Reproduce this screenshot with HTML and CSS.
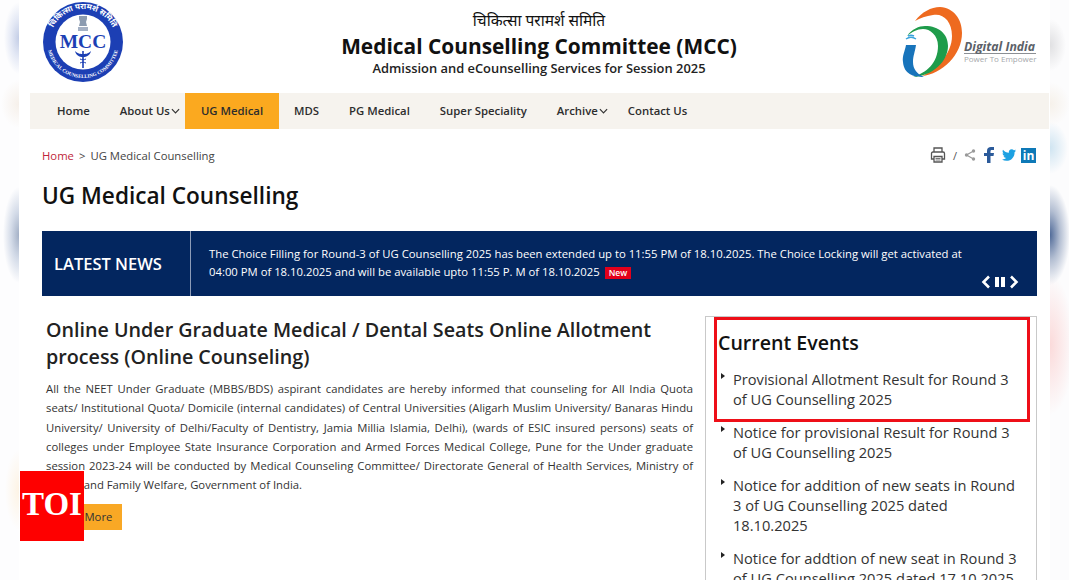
FILE: index.html
```html
<!DOCTYPE html>
<html lang="en">
<head>
<meta charset="utf-8">
<title>UG Medical Counselling</title>
<link rel="stylesheet" href="styles.css">
</head>
<body>
<div class="frame">
  <div class="side side-left"></div>
  <main class="page">
    <header class="masthead">
      <svg class="mcc-logo" viewBox="0 0 82 82" width="82" height="82" aria-label="MCC logo">
        <defs>
          <path id="ring-top" d="M8 41a33 33 0 0 1 66 0"/>
          <path id="ring-bottom" d="M5 41a36 36 0 0 0 72 0"/>
        </defs>
        <circle cx="41" cy="41" r="40" fill="#1c3fb4"/>
        <circle cx="41" cy="41" r="27.5" fill="#fff"/>
        <text class="mcc-ring" font-size="8"><textPath href="#ring-top" startOffset="50%" text-anchor="middle">चिकित्सा परामर्श समिति</textPath></text>
        <text class="mcc-ring" font-size="5"><textPath href="#ring-bottom" startOffset="50%" text-anchor="middle">MEDICAL COUNSELLING COMMITTEE</textPath></text>
        <path d="M37 15h8v3l-1 3 1 4h-8l1-4-1-3z" fill="#8b9bb0"/>
        <path d="M36 26h10v4H36z" fill="#a5b1c4"/>
        <text class="mcc-mark" x="41" y="47" text-anchor="middle">MCC</text>
        <path d="M41 50v17" stroke="#1c3fb4" stroke-width="1.6"/>
        <path d="M33 50c3 3 6 3 8 3s5 0 8-3c-1 4-4 6-8 6s-7-2-8-6z" fill="#1c3fb4"/>
        <path d="M38 58c2 1 4 1 6 0M38 62c2-1 4-1 6 0" stroke="#1c3fb4" fill="none"/>
      </svg>
      <div class="titles">
        <div class="title-hi">चिकित्सा परामर्श समिति</div>
        <div class="title-en">Medical Counselling Committee (MCC)</div>
        <div class="title-sub">Admission and eCounselling Services for Session 2025</div>
      </div>
      <div class="di-logo">
        <svg viewBox="0 0 62 72" width="62" height="72" aria-hidden="true">
          <path d="M13 14C20 5 29 0 38 0c14 1 22 12 22 26 0 22-20 41-40 43 14-6 30-22 30-40C50 14 41 6 31 8c-7 1-13 3-18 6z" fill="#ee6a1f"/>
          <path d="M5 29c5-7 12-10 18-10 14 0 23 8 23 20 0 15-15 30-35 31 13-4 25-14 25-31 0-11-8-17-15-17-6 0-11 3-16 7z" fill="#1f9c4b"/>
          <path d="M4 38h10c-1 7-3 11-3 17 0 7 4 12 11 15-11 0-20-3-21-15-1-6 2-11 3-17z" fill="#1874bb"/>
          <path d="M4 32c3-2 7-2 10 0M6 29c2-1 4-1 6 0" stroke="#3aa3dc" stroke-width="1.5" fill="none"/>
        </svg>
        <div class="di-words">
          <div class="di-name">Digital India</div>
          <div class="di-tag">Power To Empower</div>
        </div>
      </div>
    </header>

    <nav class="nav">
      <a class="nav-item">Home</a>
      <a class="nav-item nav-drop">About Us<svg class="chev" viewBox="0 0 10 6" width="9" height="6"><path d="M1 1l4 4 4-4" fill="none" stroke="#333" stroke-width="1.3"/></svg></a>
      <a class="nav-item nav-active">UG Medical</a>
      <a class="nav-item">MDS</a>
      <a class="nav-item">PG Medical</a>
      <a class="nav-item">Super Speciality</a>
      <a class="nav-item nav-drop">Archive<svg class="chev" viewBox="0 0 10 6" width="9" height="6"><path d="M1 1l4 4 4-4" fill="none" stroke="#333" stroke-width="1.3"/></svg></a>
      <a class="nav-item">Contact Us</a>
    </nav>

    <section class="content">
      <div class="crumb-row">
        <div class="crumbs"><span class="crumb-home">Home</span><span class="crumb-sep">&gt;</span><span>UG Medical Counselling</span></div>
        <div class="tools">
          <svg viewBox="0 0 16 16" width="16" height="16" aria-label="Print"><path d="M4 5V1h8v4M4 12H1.500V6.500q0-1.500 1.500-1.500h10q1.500 0 1.500 1.500V12H12" fill="none" stroke="#555" stroke-width="1.300"/><path d="M4 9.500h8V15H4z" fill="none" stroke="#555" stroke-width="1.300"/><path d="M5.500 11.500h5M5.500 13h5" stroke="#777"/></svg>
          <span class="tool-slash">/</span>
          <svg class="tool-share" viewBox="0 0 12 12" width="12" height="12" aria-label="Share"><path d="M9.500 2 2.500 6l7 4" fill="none" stroke="#999" stroke-width="1.200"/><circle cx="9.500" cy="2" r="1.700" fill="#999"/><circle cx="2.500" cy="6" r="1.700" fill="#999"/><circle cx="9.500" cy="10" r="1.700" fill="#999"/></svg>
          <svg viewBox="0 0 10 16" width="10" height="16" aria-label="Facebook"><path d="M3 16V9H0V6h3V4c0-3 1.600-4 4-4h3v3H8C6.700 3 6.500 3.500 6.500 4.500V6H10l-.5 3h-3v7z" fill="#2b5a9a"/></svg>
          <svg viewBox="0 0 24 20" width="14" height="12" aria-label="Twitter"><path d="M24 2.400c-.9.4-1.800.7-2.800.8 1-.6 1.800-1.600 2.200-2.700-1 .6-2 1-3.100 1.200A4.900 4.900 0 0 0 11.900 6.200C7.800 6 4.200 4 1.700.9.400 3.200 1 6.100 3.200 7.500c-.8 0-1.600-.2-2.200-.6 0 2.400 1.700 4.400 3.900 4.900-.7.200-1.500.2-2.200.1.600 2 2.400 3.400 4.600 3.400A9.900 9.900 0 0 1 0 17.800 13.900 13.900 0 0 0 7.500 20c9.100 0 14.300-7.700 14-14.600 1-.7 1.800-1.600 2.500-3z" fill="#1da1e2"/></svg>
          <span class="tool-in">in</span>
        </div>
      </div>

      <h1 class="page-title">UG Medical Counselling</h1>

      <section class="news">
        <div class="news-label">LATEST NEWS</div>
        <div class="news-body">
          <p class="news-text">The Choice Filling for Round-3 of UG Counselling 2025 has been extended up to 11:55 PM of 18.10.2025. The Choice Locking will get activated at 04:00 PM of 18.10.2025 and will be available upto 11:55 P. M of 18.10.2025 <span class="new-tag">New</span></p>
          <div class="news-ctrl">
            <svg viewBox="0 0 10 14" width="10" height="14"><path d="M8 1.500 2.500 7 8 12.500" fill="none" stroke="#fff" stroke-width="2.600"/></svg>
            <svg viewBox="0 0 10 10" width="10" height="10"><path d="M0 0h4v10H0zM6 0h4v10H6z" fill="#fff"/></svg>
            <svg viewBox="0 0 10 14" width="10" height="14"><path d="M2 1.500 7.500 7 2 12.500" fill="none" stroke="#fff" stroke-width="2.600"/></svg>
          </div>
        </div>
      </section>

      <div class="columns">
        <article class="intro">
          <h2 class="intro-title">Online Under Graduate Medical / Dental Seats Online Allotment process (Online Counseling)</h2>
          <p class="intro-text">All the NEET Under Graduate (MBBS/BDS) aspirant candidates are hereby informed that counseling for All India Quota seats/ Institutional Quota/ Domicile (internal candidates) of Central Universities (Aligarh Muslim University/ Banaras Hindu University/ University of Delhi/Faculty of Dentistry, Jamia Millia Islamia, Delhi), (wards of ESIC insured persons) seats of colleges under Employee State Insurance Corporation and Armed Forces Medical College, Pune for the Under graduate session 2023-24 will be conducted by Medical Counseling Committee/ Directorate General of Health Services, Ministry of Health and Family Welfare, Government of India.</p>
          <a class="read-more">Read More</a>
        </article>
        <aside class="events">
          <h2 class="events-title">Current Events</h2>
          <ul class="events-list">
            <li>Provisional Allotment Result for Round 3 of UG Counselling 2025</li>
            <li>Notice for provisional Result for Round 3 of UG Counselling 2025</li>
            <li>Notice for addition of new seats in Round 3 of UG Counselling 2025 dated 18.10.2025</li>
            <li>Notice for addtion of new seat in Round 3 of UG Counselling 2025 dated 17.10.2025</li>
          </ul>
          <div class="highlight"></div>
        </aside>
      </div>
    </section>
  </main>
  <div class="side side-right"></div>
  <div class="toi">TOI</div>
</div>
</body>
</html>
```
FILE: styles.css
```css
* { box-sizing: border-box; }
html, body { margin: 0; height: 100%; }
body {
  font-family: "Open Sans", "Noto Sans", sans-serif;
  color: #333;
  background: #fff;
  overflow: hidden;
}
.frame {
  position: relative;
  display: flex;
  width: 1069px;
  height: 580px;
  overflow: hidden;
}
.side { flex: 0 0 19px; height: 580px; }
.side-left {
  background:
    radial-gradient(ellipse 15px 36px at 19px 38px, #c3cde6 0, rgba(200,210,235,.45) 55%, rgba(255,255,255,0) 100%),
    radial-gradient(ellipse 18px 24px at 19px 104px, #f6f0ea 0, rgba(255,255,255,0) 100%),
    radial-gradient(ellipse 16px 48px at 19px 235px, #a3b0c6 0, rgba(170,185,210,.5) 50%, rgba(255,255,255,0) 100%),
    radial-gradient(ellipse 14px 40px at 19px 490px, #fdf3e4 0, rgba(255,255,255,0) 100%),
    #fdfdfe;
}
.side-right {
  background:
    radial-gradient(ellipse 16px 26px at 0 45px, #e0e0e2 0, rgba(255,255,255,0) 100%),
    radial-gradient(ellipse 20px 22px at 0 104px, #f6f1ea 0, rgba(255,255,255,0) 100%),
    radial-gradient(ellipse 18px 26px at 0 148px, #cfe4f1 0, rgba(255,255,255,0) 100%),
    radial-gradient(ellipse 20px 50px at 0 235px, #506a98 0, rgba(120,140,175,.55) 50%, rgba(255,255,255,0) 100%),
    radial-gradient(ellipse 24px 70px at 0 345px, #fbdada 0, rgba(255,255,255,0) 100%),
    #fcfcfd;
}

.page {
  flex: 1 1 auto;
  min-width: 0;
  padding: 0 1px 0 11px;
  background: #fff;
}
.masthead {
  display: flex;
  align-items: flex-start;
  justify-content: space-between;
  height: 93px;
  padding: 1px 13px 0 12px;
}
.mcc-logo { display: block; }
.mcc-ring { fill: #fff; font-family: "Liberation Serif", "Noto Sans", serif; font-weight: 700; }
.mcc-mark {
  fill: #1c3fb4;
  font-family: "Liberation Serif", serif;
  font-weight: 700;
  font-size: 19.500px;
}
.titles { text-align: center; margin-left: 52px; color: #111; }
.title-hi { font-size: 15.500px; line-height: 22px; margin-top: 8px; }
.title-en { font-size: 20.900px; font-weight: 700; line-height: 26px; margin-top: 2px; }
.title-sub { font-size: 12.900px; font-weight: 600; line-height: 17px; margin-top: 1px; color: #222; }
.di-logo { display: flex; align-items: flex-start; margin-top: 6px; }
.di-words { margin: 34px 0 0; width: 72px; }
.di-name {
  font-size: 12.300px;
  font-weight: 700;
  font-style: italic;
  line-height: 12px;
  color: #5b6168;
  border-bottom: 1px solid #8b8f94;
  white-space: nowrap;
}
.di-tag { font-size: 8px; line-height: 10px; color: #a5a8ab; white-space: nowrap; }

.nav {
  display: flex;
  height: 36px;
  padding-left: 12px;
  background: #f6f3ee;
}
.nav-item {
  display: flex;
  align-items: center;
  padding: 0 15px 1px;
  font-size: 11.350px;
  font-weight: 600;
  color: #2d2d2d;
}
.nav-drop { padding-right: 5px; }
.nav-active { padding: 0 16px 1px; background: #fba91f; }
.chev { margin-left: 1px; }

.content { padding: 0 12px 0 12px; }
.crumb-row {
  display: flex;
  align-items: center;
  justify-content: space-between;
  height: 38px;
  margin-top: 7px;
}
.crumbs { display: flex; gap: 5px; font-size: 11.300px; color: #444; }
.crumb-home { color: #c0263a; }
.tools { display: flex; align-items: center; gap: 8px; padding-right: 1px; }
.tool-slash { font-size: 11px; color: #555; margin: 0 -1px; }
.tool-in {
  display: block;
  width: 15px;
  height: 15px;
  margin-left: -3px;
  background: #0e79b7;
  color: #fff;
  font-size: 12px;
  font-weight: 700;
  line-height: 15px;
  text-align: center;
}
.page-title {
  margin: 5px 0 0;
  font-size: 22.600px;
  font-weight: 600;
  line-height: 33px;
  color: #111;
}
.news {
  display: flex;
  height: 65px;
  margin-top: 19px;
  background: #03265f;
  color: #fff;
}
.news-label {
  flex: 0 0 149px;
  display: flex;
  align-items: center;
  padding-left: 12px;
  border-right: 1px solid #8d9cb8;
  font-size: 16.500px;
  font-weight: 600;
}
.news-body {
  flex: 1;
  display: flex;
  padding: 14px 18px 6px 18px;
  min-width: 0;
}
.news-text {
  flex: 1;
  margin: 0;
  font-size: 11.300px;
  line-height: 18px;
  min-width: 0;
}
.new-tag {
  display: inline-block;
  margin-left: 2px;
  padding: 0 4px;
  background: #e3001b;
  color: #fff;
  font-size: 8.500px;
  font-weight: 600;
  line-height: 12px;
  vertical-align: 0;
}
.news-ctrl {
  flex: 0 0 38px;
  display: flex;
  align-items: center;
  justify-content: space-between;
  align-self: flex-end;
  margin-left: 19px;
  height: 16px;
}

.columns {
  display: flex;
  justify-content: space-between;
  align-items: flex-start;
  margin-top: 20px;
}
.intro { width: 647px; margin-left: 4px; }
.intro-title {
  margin: 0;
  font-size: 19.700px;
  font-weight: 600;
  line-height: 27px;
  color: #222;
}
.intro-text {
  margin: 9px 0 0;
  font-size: 11.300px;
  line-height: 19.300px;
  text-align: justify;
  color: #333;
}
.read-more {
  display: inline-block;
  margin-top: 9px;
  padding: 0 10px 0 9px;
  height: 26px;
  line-height: 26px;
  font-size: 11.300px;
  background: #f9a825;
  color: #333;
}
.events {
  position: relative;
  width: 332px;
  height: 300px;
  padding: 12px 16px 0 12px;
  border: 1px solid #c9c9c9;
  border-bottom: 0;
}
.events-title {
  margin: 0;
  font-size: 19.600px;
  font-weight: 600;
  line-height: 27px;
  color: #111;
}
.events-list { list-style: none; margin: 13px 0 0; padding: 0; }
.events-list li {
  position: relative;
  padding-left: 15px;
  margin-bottom: 13px;
  font-size: 14.650px;
  line-height: 20px;
  color: #333;
}
.events-list li::before {
  content: "";
  position: absolute;
  left: 3px;
  top: 4px;
  border-left: 4px solid #222;
  border-top: 3.500px solid transparent;
  border-bottom: 3.500px solid transparent;
}
.highlight {
  position: absolute;
  left: 8px;
  top: 0;
  width: 316px;
  height: 105px;
  border: 3.500px solid #ee0f18;
}
.toi {
  position: absolute;
  left: 20px;
  top: 471px;
  width: 64px;
  height: 70px;
  background: #fe0000;
  color: #fff;
  font-family: "Liberation Serif", serif;
  font-weight: 700;
  font-size: 33px;
  line-height: 66px;
  text-align: center;
}
```
